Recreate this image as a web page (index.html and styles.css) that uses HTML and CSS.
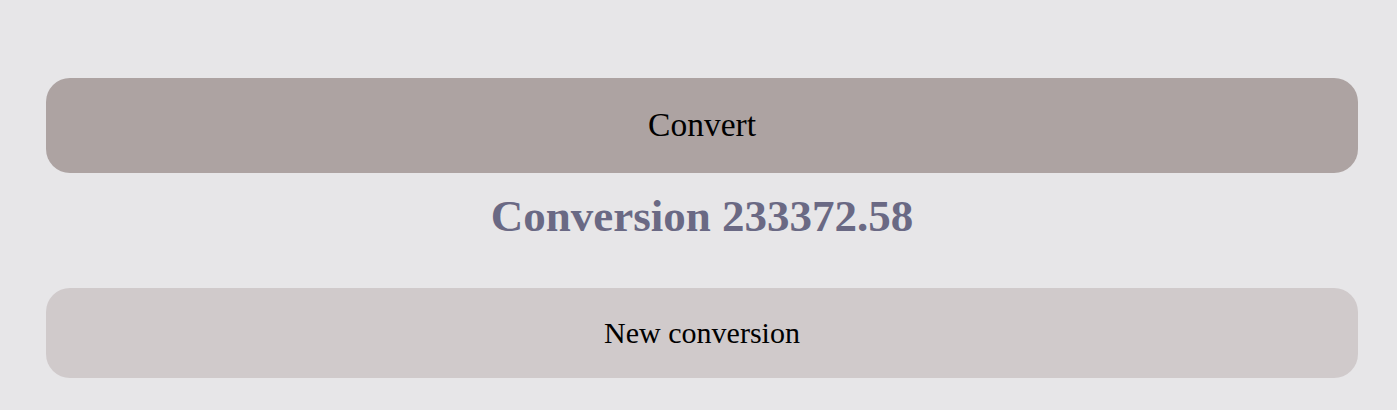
FILE: index.html
```html
<!DOCTYPE html>
<html>
<head>
<meta charset="utf-8">
<link rel="stylesheet" href="styles.css">
</head>
<body>
<main class="page">
  <button class="btn btn-convert">Convert</button>
  <h2 class="result">Conversion 233372.58</h2>
  <button class="btn btn-new">New conversion</button>
</main>
</body>
</html>
```
FILE: styles.css
```css
html, body {
  margin: 0;
  padding: 0;
  background: #e7e6e8;
}
body {
  font-family: "Liberation Serif", "Times New Roman", serif;
}
.page {
  display: flex;
  flex-direction: column;
  padding: 78px 39px 0 46px;
}
.btn {
  display: flex;
  align-items: center;
  justify-content: center;
  border: none;
  border-radius: 24px;
  font-family: "Liberation Serif", "Times New Roman", serif;
  color: #000;
  padding: 0;
  width: 100%;
}
.btn-convert {
  height: 94.5px;
  background: #ada3a2;
  font-size: 33.5px;
}
.btn-new {
  height: 90.5px;
  background: #d0cacb;
  font-size: 30px;
}
.result {
  margin: 18.5px 0 45px;
  text-align: center;
  font-size: 45px;
  font-weight: bold;
  line-height: 1.15;
  color: #6a6984;
}
```
